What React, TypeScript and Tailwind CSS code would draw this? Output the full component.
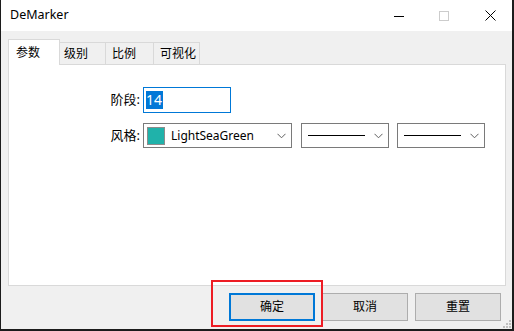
import React from 'react';

const font = { fontFamily: '"Noto Sans", "Noto Sans CJK SC", sans-serif' };

const Chevron: React.FC = () => (
  <svg width="9" height="6" viewBox="0 0 9 6" className="shrink-0">
    <path d="M0.5 0.8 L4.5 4.8 L8.5 0.8" fill="none" stroke="#606060" strokeWidth="1" />
  </svg>
);

const LineSelect: React.FC<{ className?: string }> = ({ className }) => (
  <div className={`flex items-center h-[25px] w-[88px] border border-[#7a7a7a] bg-white pl-[6px] pr-[5px] ${className ?? ''}`}>
    <div className="h-px w-[57px] bg-black" />
    <div className="ml-auto">
      <Chevron />
    </div>
  </div>
);

const App: React.FC = () => {
  return (
    <div className="w-[514px] h-[331px] bg-[#1c1c1c] overflow-hidden" style={font}>
      <div className="relative ml-px w-[511px] h-[329px] bg-[#f0f0f0] flex flex-col text-black">
        {/* Title bar */}
        <div className="h-[31px] bg-white flex items-center pl-[9px] shrink-0">
          <span className="text-[12.5px] leading-none">DeMarker</span>
          <div className="ml-auto flex items-center pr-[16px]">
            <svg width="10" height="10" viewBox="0 0 10 10">
              <path d="M0 5.5 H10" stroke="#000" strokeWidth="1" />
            </svg>
            <svg width="10" height="10" viewBox="0 0 10 10" className="ml-[35px]">
              <rect x="0.5" y="0.5" width="9" height="9" fill="none" stroke="#cccccc" strokeWidth="1" />
            </svg>
            <svg width="11" height="11" viewBox="0 0 11 11" className="ml-[36px]">
              <path d="M0.5 0.5 L10.5 10.5 M10.5 0.5 L0.5 10.5" stroke="#000" strokeWidth="1" />
            </svg>
          </div>
        </div>

        <div className="pl-[7px] pt-[8px] flex flex-col">
          {/* Tabs */}
          <div className="relative z-10 -mb-px flex items-end h-[26px] text-[12px]">
            <div className="h-[26px] w-[52px] bg-white border border-b-0 border-[#d9d9d9] flex items-center pl-[7px]">
              参数
            </div>
            <div className="h-[22px] w-[46px] mb-px border-t border-r border-[#d9d9d9] flex items-center pl-[4px]">
              级别
            </div>
            <div className="h-[22px] w-[48px] mb-px border-t border-r border-[#d9d9d9] flex items-center pl-[6px]">
              比例
            </div>
            <div className="h-[22px] w-[46px] mb-px border-t border-r border-[#d9d9d9] flex items-center pl-[6px]">
              可视化
            </div>
          </div>

          {/* Panel */}
          <div className="h-[222px] w-[498px] border border-[#d9d9d9] bg-white pt-[22px] flex flex-col text-[13px]">
            <div className="flex items-center">
              <div className="w-[134px] text-right pr-[3px]">阶段:</div>
              <div className="h-[26px] w-[88px] border border-[#0078d7] flex items-center pl-[2px]">
                <span className="bg-[#0078d7] text-white text-[14px] leading-[18px] pr-px">14</span>
              </div>
            </div>
            <div className="flex items-center mt-[10px]">
              <div className="w-[134px] text-right pr-[3px]">风格:</div>
              <div className="flex items-center h-[25px] w-[149px] border border-[#7a7a7a] pl-[3px] pr-[5px]">
                <div className="h-[18px] w-[18px] bg-[#20b2aa] border border-[#8c8c8c]" />
                <span className="ml-[6px] text-[12px]">LightSeaGreen</span>
                <div className="ml-auto">
                  <Chevron />
                </div>
              </div>
              <LineSelect className="ml-[9px]" />
              <LineSelect className="ml-[8px]" />
            </div>
          </div>

          {/* Buttons */}
          <div className="flex justify-end gap-[7px] mt-[7px] pr-[11px] text-[12px]">
            <button className="h-[28px] w-[86px] bg-[#e1e1e1] border-2 border-[#0078d7]">确定</button>
            <button className="h-[28px] w-[86px] bg-[#e1e1e1] border border-[#adadad]">取消</button>
            <button className="h-[28px] w-[86px] bg-[#e1e1e1] border border-[#adadad]">重置</button>
          </div>
        </div>

        {/* Highlight annotation */}
        <div className="absolute left-[210px] top-[280px] w-[112px] h-[47px] border-2 border-[#ed1c24] pointer-events-none" />

        {/* Resize grip */}
        <svg width="10" height="10" viewBox="0 0 10 10" className="absolute right-0 bottom-0">
          <rect x="7" y="1" width="2" height="2" fill="#bfbfbf" />
          <rect x="7" y="4" width="2" height="2" fill="#bfbfbf" />
          <rect x="4" y="4" width="2" height="2" fill="#bfbfbf" />
          <rect x="7" y="7" width="2" height="2" fill="#bfbfbf" />
          <rect x="4" y="7" width="2" height="2" fill="#bfbfbf" />
          <rect x="1" y="7" width="2" height="2" fill="#bfbfbf" />
        </svg>
      </div>
    </div>
  );
};

export default App;
